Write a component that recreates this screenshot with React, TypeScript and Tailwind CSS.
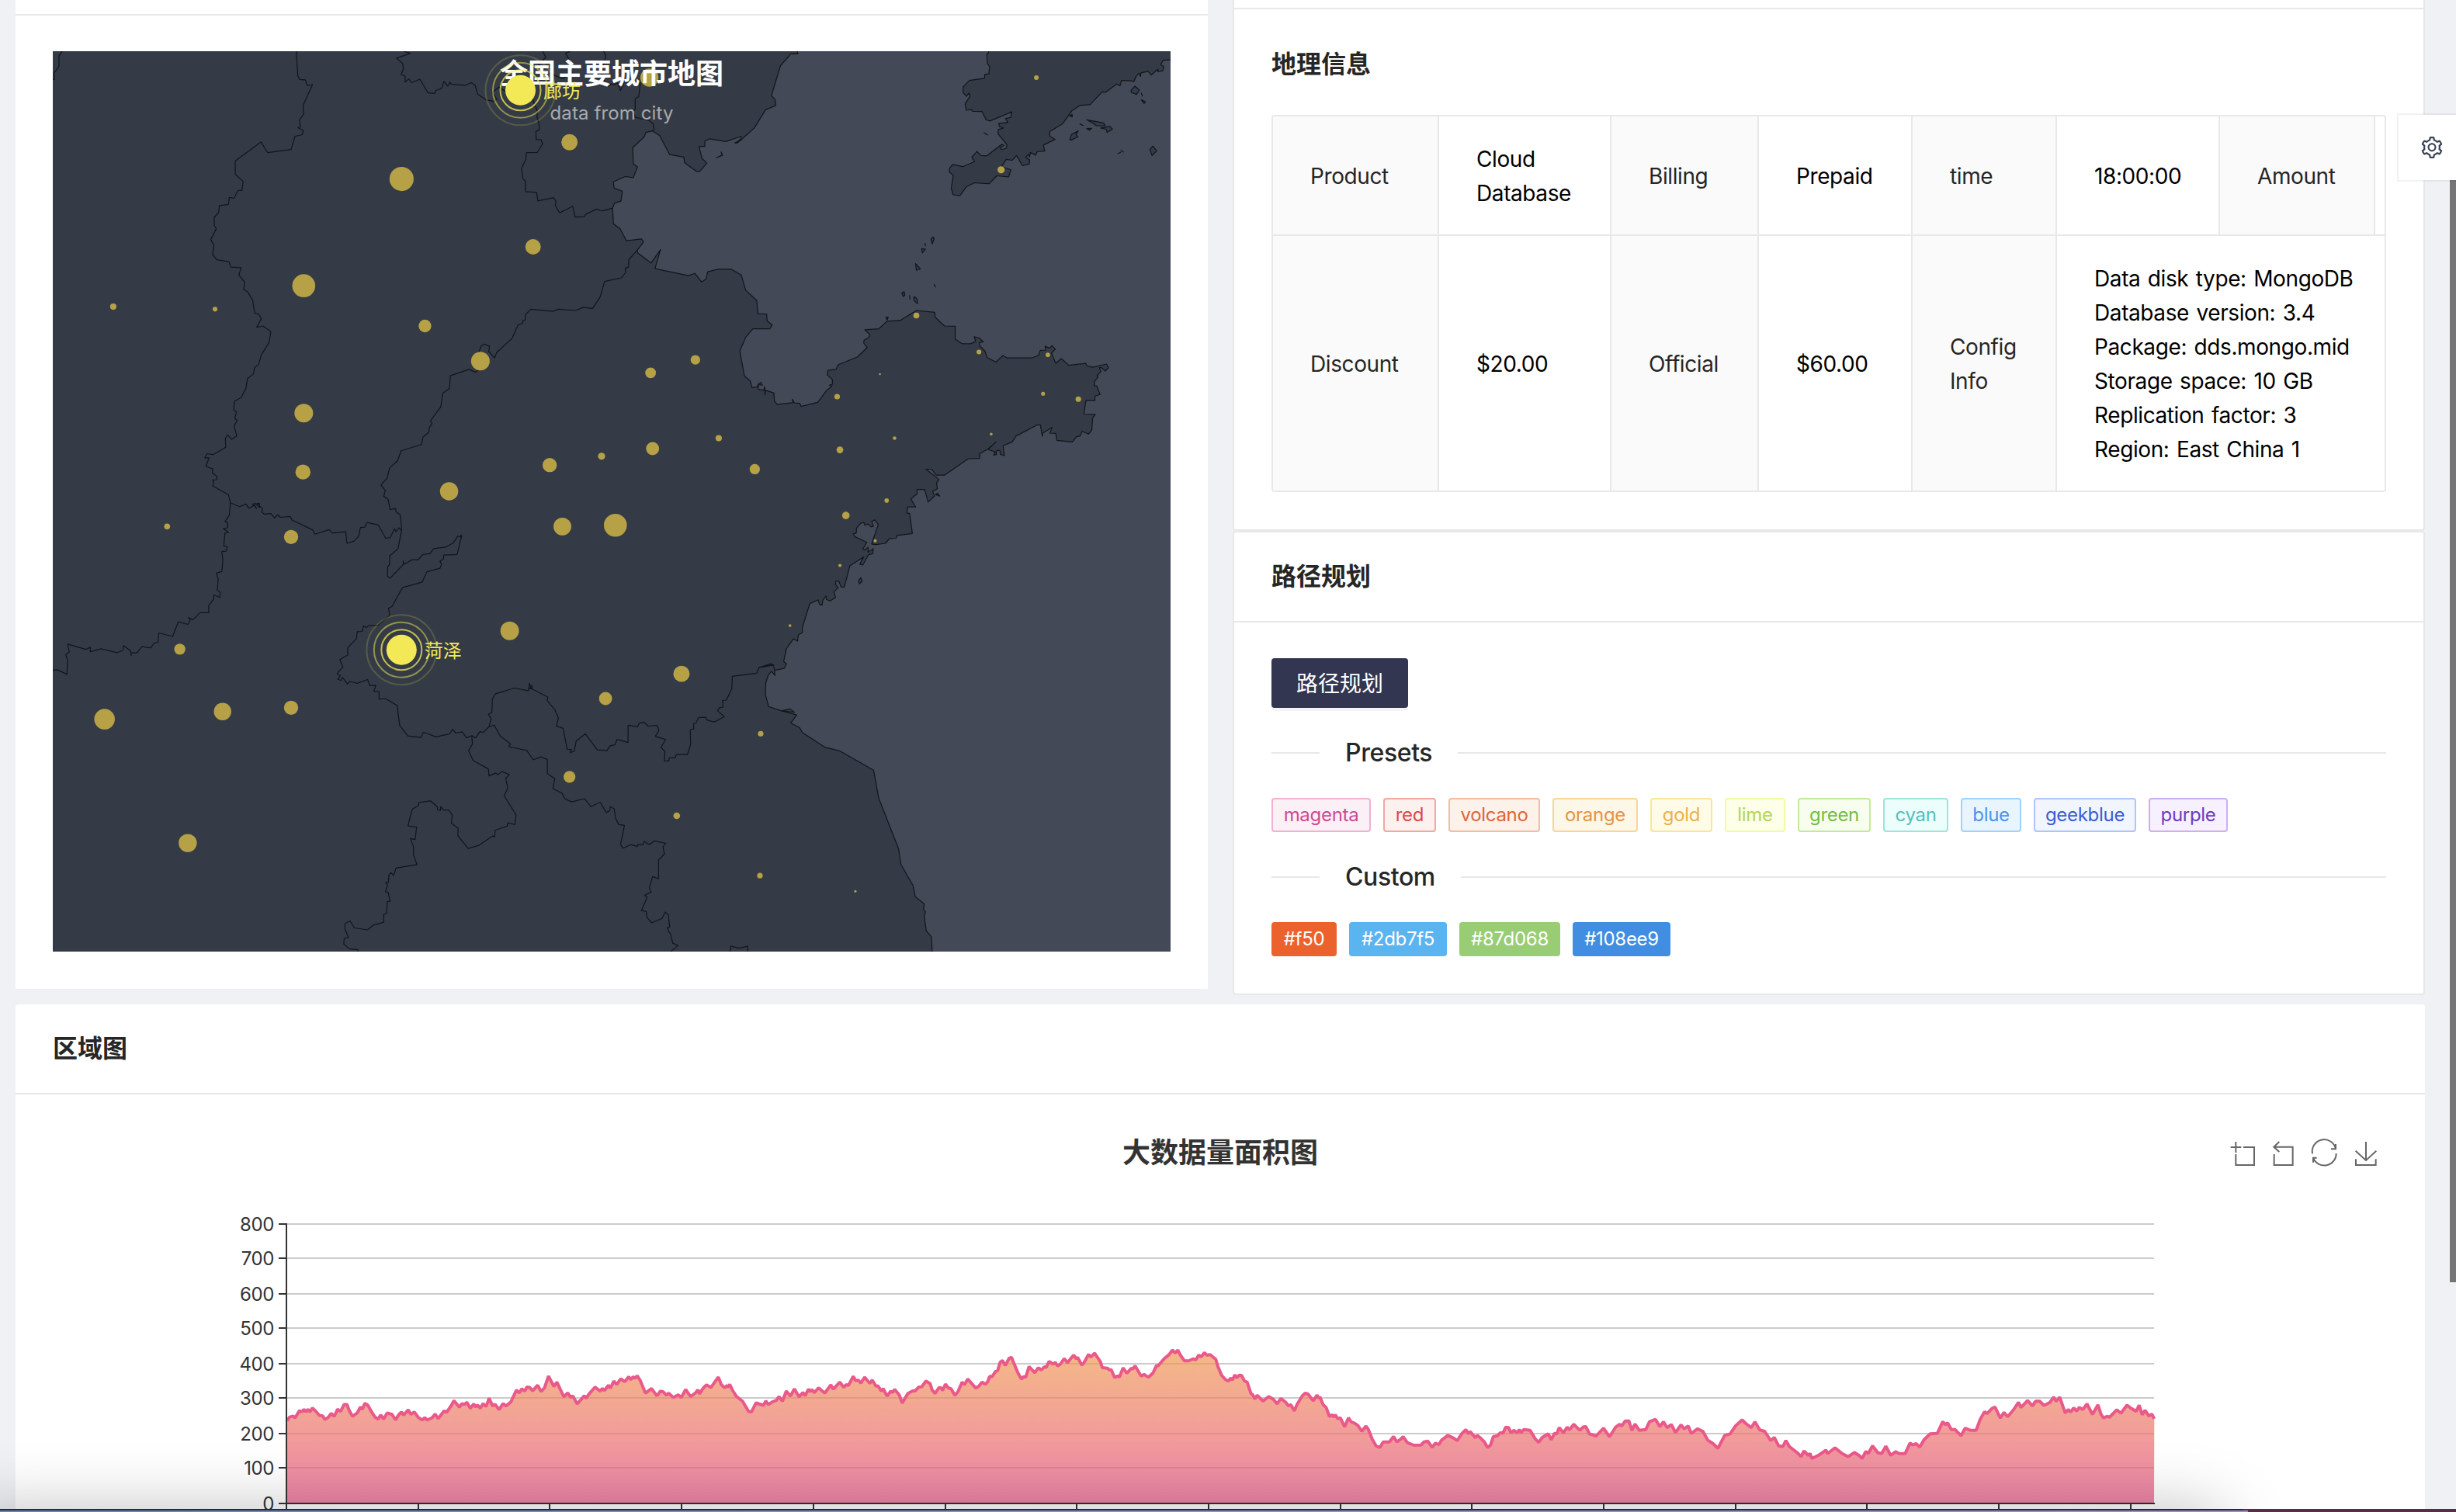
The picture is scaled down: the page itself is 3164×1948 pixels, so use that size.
import React from "react";
import { AiOutlineSetting } from "react-icons/ai";

type Sheet = "A" | "B" | "C" | "D";
type Part = [Sheet, string];

// The map is digitised on four overlapping sheets; each has its own origin.
const SHEETS: Record<Sheet, [number, number]> = { A: [-68, -66], B: [712, -66], C: [-68, 554], D: [712, 554] };

const toXY = (s: Sheet, x: number, y: number): [number, number] => [
  SHEETS[s][0] + x / 1.96,
  SHEETS[s][1] + y / 2.45,
];

const pts = (parts: Part[]) =>
  parts
    .map(([s, str]) =>
      str
        .trim()
        .split(/\s+/)
        .map((p) => {
          const [x, y] = p.split(",").map(Number);
          return toXY(s, x, y).map((n) => n.toFixed(1)).join(",");
        })
        .join(" "),
    )
    .join(" ");

const LAND: Part[][] = [
  [
    ["B", "484,120 484,162 486,170 468,170 442,207 419,302 428,314 430,333 404,347 376,404 341,443 333,451 327,451 336,445 342,438 343,430 304,447 264,438 251,445 251,462 236,462 244,500 256,515 238,541 230,541 200,514 198,496 162,488 137,428 118,413 102,418 98,432 69,466 70,517 81,527 70,561 51,557 20,574 22,594 43,604 39,635 23,641 18,657 20,706 37,722 53,760 91,754 96,764 80,790 82,799 115,830 139,788 125,848 210,870 226,863 243,890 254,881 258,858 284,850 318,850 343,868 354,916 382,949 385,990 407,991 408,1013 421,1025 415,1038 372,1038 354,1065 339,1108 351,1187 366,1203 370,1224 383,1221 386,1212 393,1207 396,1216 387,1214 385,1228 399,1232 402,1220 403,1246 404,1232 425,1240 427,1267 434,1277 473,1271 472,1260 477,1272 491,1273 494,1283 536,1270 558,1233 572,1219 565,1216 573,1213 573,1198 560,1183 562,1169 582,1166 588,1151 636,1127 661,1097 652,1083 653,1073 664,1067 668,1057 655,1041 690,1038 711,1014 745,1011 785,980 831,986 833,1002 856,1029 883,1030 883,1071 901,1085 922,1085 935,1078 931,1063 944,1067 954,1079 944,1082 945,1092 958,1108 964,1129 986,1143 1004,1122 1014,1130 1076,1130 1093,1122 1098,1106 1112,1105 1110,1093 1122,1099 1127,1091 1136,1102 1126,1114 1137,1147 1151,1132 1170,1153 1213,1147 1215,1155 1230,1159 1265,1149 1270,1161 1262,1171 1252,1160 1247,1160 1251,1172 1241,1187 1244,1190 1235,1204 1234,1218 1240,1218 1249,1245 1236,1250 1236,1264 1213,1264 1208,1307 1237,1308 1230,1319 1228,1357 1220,1370 1203,1361 1199,1376 1189,1379 1179,1395 1140,1390 1137,1368 1122,1367 1128,1349 1104,1367 1103,1377 1098,1341 1091,1341 1037,1376 1027,1395 1004,1407 1007,1438 997,1434 996,1422 988,1422 987,1435 980,1436 985,1427 966,1419 986,1395 966,1417 945,1432 945,1447 916,1448 856,1500 835,1500 824,1481 809,1481 842,1513"],
    ["D", "836,6 838,24 826,32 831,46 815,66 806,26 787,26 787,40 771,56 783,81 763,81 761,100 768,102 775,165 736,171 734,180 717,181 707,196 683,200 672,198 689,137 680,122 672,127 677,142 671,144 663,135 655,139 653,130 645,132 634,148 633,164 626,166 629,175 660,193 650,214 655,217 663,208 663,224 676,213 675,229 664,232 650,264 642,262 652,239 617,267 603,334 595,334 589,315 582,315 581,326 588,336 577,349 581,367 567,378 558,373 557,362 549,375 547,391 540,388 537,374 516,386 497,461 497,478 487,485 485,505 475,497 457,528 450,569 457,577 451,591 427,597 428,613 419,600 411,612 405,637 404,674 412,711 445,725 483,738 468,763 490,778 498,794 555,840 591,851 677,912 690,1000 740,1160 746,1209 777,1277 782,1311 805,1334 803,1352 808,1359 805,1374 810,1419 823,1438 827,1530"],
    ["C", "80,1530"],
    ["A", "80,120"],
  ],
  [
    ["B", "967,120 967,167 963,170 964,200 970,210 968,233 958,235 957,247 919,254 903,275 903,292 911,304 918,294 921,303 908,328 911,348 924,346 927,351 951,352 961,378 971,382 1026,353 1023,371 1010,374 1016,386 993,390 995,400 1005,404 992,409 991,422 1014,457 1012,468 1001,472 996,466 1006,460 1001,455 963,492 948,491 938,478 925,496 932,510 902,526 877,519 869,531 868,543 878,553 873,595 878,615 895,618 911,590 931,577 969,580 988,555 1018,558 1024,536 1000,526 1012,503 1027,506 1038,491 1053,523 1070,518 1071,505 1061,496 1069,487 1071,496 1073,481 1086,490 1090,479 1109,477 1106,458 1135,440 1122,430 1122,415 1154,391 1178,349 1198,333 1224,330 1254,290 1263,291 1291,265 1299,271 1303,254 1327,255 1334,258 1339,243 1347,231 1351,241 1352,230 1370,225 1378,237 1395,218 1395,226 1407,224 1410,210 1402,204 1408,190 1427,189 1470,189 1470,120"],
  ],
];

const ISLANDS: Part[] = [
  ["B", "280,498 296,490 292,480 295,489"],
  ["B", "1327,285 1337,272 1348,284 1341,298 1328,292"],
  ["B", "1353,315 1364,321 1360,327"],
  ["B", "1353,294 1356,303"],
  ["B", "1215,378 1258,388 1262,397 1240,397 1230,388"],
  ["B", "1250,404 1274,399 1280,408 1267,418 1264,408"],
  ["B", "1172,440 1177,424 1194,413 1188,424 1193,432 1176,442"],
  ["B", "1215,406 1228,405 1222,411"],
  ["B", "1172,366 1178,361 1179,369"],
  ["B", "1375,472 1382,461 1392,476 1380,491"],
  ["B", "1294,485 1301,480"],
  ["B", "1302,474 1308,480"],
  ["B", "1198,391 1206,396"],
  ["B", "956,419 965,426"],
  ["B", "822,755 827,748 830,753 825,770"],
  ["B", "798,785 808,787 800,798"],
  ["B", "807,768 808,776"],
  ["B", "783,832 795,849 785,853"],
  ["B", "830,898 833,906"],
  ["B", "748,925 754,921 756,931 752,936"],
  ["B", "768,933 769,944"],
  ["B", "779,936 787,944 788,959 779,948"],
  ["B", "708,1001 714,1001 711,1010"],
  ["D", "639,314 645,304 648,316 641,324"],
  ["D", "834,42 838,38 844,47"],
  ["D", "445,725 466,718 477,729"],
  ["D", "388,588 418,576 424,580"],
];

const BORDERS: Part[][] = [
  [
    ["A", "748,150 748,162 752,240 757,251 771,252 776,270 789,267 765,333 767,360 756,379 759,400 752,403 766,412 763,425 745,430 735,472 676,482 659,448 594,508 594,550 614,573 611,601 601,601 591,626 579,623 577,645 554,649 552,671 541,686 541,711 546,722 532,756 540,773 537,803 547,820 578,826 583,843 609,845 603,868 618,891 615,913 625,921 638,948 643,989 653,991 660,1006 648,1033 664,1029 684,1047 679,1082 660,1120 653,1150 643,1160 640,1180 625,1195 621,1226 609,1255 592,1266 590,1294 597,1300 593,1320 599,1328 591,1344 598,1376 585,1387 575,1373 569,1384 570,1412 538,1435 523,1432 517,1445 528,1445 520,1472 537,1480 536,1492 548,1504 547,1514 537,1515 540,1522 537,1534"],
    ["C", "577,43 582,68 579,107 568,128 574,129 575,147 564,150 577,161 568,164 565,204 574,207 571,221 560,222 563,250 560,285 546,290 551,308 549,344 556,350 555,367 540,359 539,373 527,393 527,415 505,415 487,437 476,430 480,440 475,452 450,444 436,490 401,479 399,508 388,512 381,526 358,522 346,542 331,542 331,550 330,536 312,519 310,534 296,541 255,529 228,538 228,524 217,531 171,514 175,539 166,547 171,565 169,609 144,595 133,596"],
  ],
  [["C", "582,68 605,80 621,72 629,86 642,75 648,86 638,72 645,70 655,83 655,70 649,70 663,86 661,97 667,104 684,102 693,116 701,106 708,114 733,111 737,122 790,154 795,167 831,153 839,164 873,159 876,196 894,189 906,173 910,146 921,145 927,130 955,138 974,180 985,178 996,150 1000,160 1007,147 1014,155"]],
  [
    ["B", "80,790 59,820 58,843 50,846 51,860 40,877 0,888"],
    ["A", "1526,890 1515,938 1496,974 1473,970 1453,980 1410,976 1396,983 1340,976 1327,993 1326,1010 1320,1012 1320,1020 1308,1026 1293,1068 1254,1113 1249,1130 1234,1109 1236,1093 1223,1086 1215,1092 1208,1115 1212,1140 1210,1165 1201,1175 1184,1166 1137,1186 1135,1226 1118,1241 1113,1284 1087,1328 1091,1337 1084,1350 1083,1364 1068,1380 1064,1403 1013,1423 1004,1454 984,1477 977,1510 962,1531"],
    ["C", "973,30 969,47 980,57 985,90 999,86 1000,97 1010,105 1013,130 1014,155 1005,213 984,236 984,262 979,270 978,299 985,306 1019,262 1018,252 1021,262 1040,248 1056,248 1068,231 1086,228 1095,213 1125,208 1145,194 1156,173 1164,177 1163,170 1166,172 1154,231 1120,233 1120,245 1111,252 1115,262 1111,275 1078,286 1066,318 1016,336 990,395 981,401 984,423 954,455 932,455 925,462 918,457 914,474 902,475 900,497 878,525 878,549 858,563 866,586 851,607 859,614 853,625 861,629 865,619 877,640 883,632 902,638 928,626 934,645 949,644 944,663 957,664 957,688 973,686 1003,708 1009,770 1030,804 1063,809 1069,792 1101,807 1136,797 1143,783 1151,795 1167,791 1178,810 1191,803 1201,810 1212,790 1220,793 1235,775 1240,748 1233,736 1242,729 1243,688 1251,671 1299,653 1334,661 1337,638 1342,655 1337,655 1343,645 1344,656 1383,681 1382,693 1401,721 1410,748 1405,773 1422,780 1432,846 1443,847 1440,857 1450,852 1455,820 1478,797 1508,848"],
    ["D", "4,850 12,835 24,832 29,815 57,825 57,770 81,775 85,764 96,760 108,773 131,771 135,787 126,805 152,815 140,840 150,852 149,883 160,883 161,873 176,873 179,863 207,863 215,830 214,784 223,782 222,766 229,762 235,746 253,745 257,754 275,760 300,743 283,725 287,716 297,713 296,692 305,691 319,655 320,616 382,606 388,588 424,580 427,597"],
  ],
  [
    ["C", "1235,775 1248,770 1263,804 1289,829 1285,838 1330,850 1347,879 1366,870 1382,878 1382,923 1401,939 1396,970 1419,985 1426,1002 1443,1012 1476,1002 1492,1027 1515,1013 1531,1046"],
    ["D", "11,1040 12,1027 22,1034 26,1066 34,1084 48,1086 38,1147 44,1158 64,1147 81,1153 82,1147 95,1147 98,1137 111,1147 123,1135 152,1143 145,1154 149,1176 134,1196 134,1255 119,1248 111,1283 115,1297 99,1307 105,1313 91,1355 103,1358 105,1378 117,1394 143,1380 151,1360 159,1369 162,1407 156,1409 161,1424 164,1428 170,1458 183,1466 163,1486"],
  ],
  [["C", "1191,803 1193,829 1183,851 1195,882 1233,908 1235,930 1252,921 1257,927 1267,916 1286,926 1277,938 1282,969 1273,993 1303,1053 1300,1084 1282,1078 1281,1088 1250,1102 1249,1123 1244,1120 1208,1150 1182,1159 1156,1119 1157,1096 1140,1080 1142,1053 1133,1038 1120,1038 1113,1027 1112,1039 1105,1038 1104,1027 1087,1009 1058,1014 1056,1024 1041,1035 1030,1088 1052,1092 1048,1131 1036,1128 1044,1153 1044,1180 1053,1210 1000,1221 994,1244 987,1235 982,1243 981,1266 974,1267 979,1275 973,1296 980,1297 985,1326 978,1327 976,1364 969,1368 969,1392 943,1401 928,1416 895,1410 884,1388 871,1396 871,1414 880,1440 869,1443 868,1461 882,1476 904,1479 904,1486"]],
  [["A", "157,150 157,162 149,177 149,210 136,231 138,250 132,252"]],
  [["A", "1020,150 1020,162 1036,168 1001,184 1016,199 1019,217 1013,235 1023,240 1023,259 1032,249 1039,261 1060,250 1081,293 1098,295 1100,286 1115,279 1121,257 1131,272 1136,259 1140,266 1175,269 1190,261 1200,269 1206,297 1227,315 1248,320 1254,313 1244,290 1260,275 1290,300 1345,310 1350,330 1357,350 1356,370 1361,390 1362,410 1353,415 1354,440 1366,441 1370,454 1357,481 1329,482 1328,502 1317,531 1320,563 1327,573 1327,605 1355,607 1358,634 1398,624 1404,636 1402,648 1413,672 1446,651 1452,685 1475,684 1480,676 1506,660 1520,666 1547,657"]],
  [["A", "1370,162 1378,180 1360,205 1368,235"]],
  [["A", "1440,162 1428,168 1440,195 1440,215 1445,230 1420,248 1395,235"]],
  [["A", "1524,162 1530,175 1525,200 1520,235"], ["B", "0,262 8,272 14,265 22,268 30,262 38,286 48,258 62,266 88,262 84,305 75,312 75,345 70,350 75,370 110,380 120,390 123,408 118,413"]],
  [["D", "314,1490 317,1467 337,1474 359,1468 359,1490"]],
];

const DOTS: [Sheet, number, number, number][] = [
  ["A", 1014, 565, 61], ["A", 767, 902, 58], ["A", 1438, 449, 41], ["A", 1346, 779, 39], ["A", 286, 968, 16],
  ["A", 543, 976, 12], ["A", 1073, 1029, 32], ["A", 1213, 1140, 47], ["A", 767, 1304, 47], ["A", 765, 1490, 38],
  ["A", 1388, 1468, 36], ["A", 1519, 1440, 18], ["A", 1134, 1551, 46],
  ["B", 111, 245, 46], ["B", 1088, 245, 12], ["B", 999, 536, 18], ["B", 785, 996, 15], ["B", 943, 1111, 12],
  ["B", 1117, 1120, 11], ["B", 227, 1136, 24], ["B", 114, 1177, 27], ["B", 693, 1181, 5], ["B", 585, 1252, 14],
  ["B", 1105, 1243, 10], ["B", 1194, 1260, 14], ["B", 119, 1416, 33], ["B", 286, 1383, 16], ["B", 592, 1420, 17],
  ["B", 730, 1383, 9], ["B", 974, 1370, 7], ["B", 377, 1481, 26],
  ["C", 422, 143, 15], ["C", 735, 176, 36], ["C", 1420, 143, 45], ["C", 454, 530, 28], ["C", 1287, 472, 47],
  ["C", 264, 751, 52], ["C", 562, 727, 44], ["C", 735, 715, 36], ["C", 1529, 686, 33], ["C", 1438, 933, 30],
  ["C", 474, 1142, 46],
  ["D", 25, 139, 58], ["D", 710, 61, 11], ["D", 607, 108, 19], ["D", 681, 188, 8], ["D", 592, 266, 8],
  ["D", 466, 456, 7], ["D", 192, 608, 41], ["D", 392, 797, 14], ["D", 180, 1056, 17], ["D", 390, 1245, 14],
  ["D", 631, 1294, 6],
];

function Ripple({ x, y, name }: { x: number; y: number; name: string }) {
  return (
    <g>
      <g fill="none" stroke="#f3e957" strokeWidth="2">
        <circle cx={x} cy={y} r="45" opacity="0.18" />
        <circle cx={x} cy={y} r="35.5" opacity="0.5" />
        <circle cx={x} cy={y} r="26" opacity="0.75" />
      </g>
      <circle cx={x} cy={y} r="19.5" fill="#f3e957" />
      <text x={x + 29.5} y={y + 9.5} fontSize="24" fill="#f3e957">
        {name}
      </text>
    </g>
  );
}

function CityMap() {
  return (
    <svg viewBox="0 0 1440 1160" className="block h-[1160px] w-[1440px] bg-[#434956]">
      <g fill="#343b46" stroke="#12151b" strokeWidth="1.2" strokeLinejoin="round">
        {LAND.map((l, i) => (
          <polygon key={i} points={pts(l)} />
        ))}
        {ISLANDS.map((l, i) => (
          <polygon key={i} points={pts([l])} />
        ))}
      </g>
      <g fill="none" stroke="#12151b" strokeWidth="1.2" strokeLinejoin="round">
        {BORDERS.map((l, i) => (
          <polyline key={i} points={pts(l)} />
        ))}
      </g>
      {DOTS.map(([s, x, y, w], i) => {
        const [cx, cy] = toXY(s, x, y);
        return <circle key={i} cx={cx} cy={cy} r={w / 3.92} fill="#b6a146" />;
      })}
      <text x="720" y="42" textAnchor="middle" fontSize="36" fontWeight="700" fill="#fff">
        全国主要城市地图
      </text>
      <text x="720" y="88" textAnchor="middle" fontSize="24" fill="#aaaaaa" textLength="159">
        data from city
      </text>
      <Ripple x={602.5} y={50.3} name="廊坊" />
      <Ripple x={449.3} y={771.2} name="菏泽" />
    </svg>
  );
}

const SERIES: [number, number, number, number, string][] = [
  [0, 1270, 1.568, 2.3127, "580,1296 585,1285 592,1282 596,1288 605,1266 610,1270 614,1262 618,1270 622,1262 626,1270 631,1258 638,1268 645,1280 652,1282 656,1292 663,1286 669,1274 675,1283 682,1262 688,1268 695,1248 701,1248 705,1264 712,1283 722,1272 728,1255 732,1262 737,1244 743,1250 750,1268 758,1286 764,1291 769,1279 775,1291 782,1273 792,1277 799,1294 805,1279 811,1270 815,1279 825,1264 830,1277 837,1270 845,1286 853,1294 858,1287 863,1294 873,1287 879,1276 885,1290 897,1267 902,1271 912,1250 917,1236 928,1256 933,1245 938,1248 943,1241 950,1259 957,1246 961,1255 965,1249 970,1259 976,1245 982,1254 988,1229 995,1252 1000,1247 1008,1263 1016,1245 1022,1252 1032,1240 1043,1205 1049,1213 1054,1201 1060,1208 1064,1196 1070,1197 1076,1207 1086,1190 1093,1209 1100,1198 1108,1163 1119,1194 1125,1181 1131,1200 1139,1225 1147,1213 1153,1227 1157,1222 1166,1246 1180,1222 1184,1229 1190,1216 1202,1196 1212,1208 1217,1200 1221,1206 1229,1190 1233,1199 1240,1178 1246,1188 1254,1171 1262,1180 1270,1165 1274,1174 1279,1165 1283,1170 1287,1162 1293,1175 1304,1214 1310,1207 1316,1200 1327,1222 1334,1208 1340,1210 1346,1220 1351,1214 1360,1227 1370,1219 1376,1227 1385,1203 1395,1224 1405,1213 1410,1204 1413,1216 1420,1200 1427,1189 1436,1197 1451,1166 1457,1188 1464,1198 1469,1190 1470,1197 1474,1188 1480,1206 1488,1224 1500,1238 1512,1268 1518,1270 1527,1243 1542,1250 1547,1237 1552,1248 1560,1240"],
  [1000, 1560, 1.6333, 3, "0,733 6,718 13,736 21,697 30,716 38,688 48,719 56,702 61,714 68,689 72,699 75,691 80,703 89,684 102,704 115,673 120,689 134,662 142,682 147,672 152,674 162,640 167,656 173,655 178,666 186,643 197,667 202,654 210,678 214,676 221,697 225,687 233,716 241,697 245,702 249,690 259,712 265,743 277,706 287,696 292,696 300,681 306,680 315,658 324,668 328,692 334,706 342,684 346,683 350,694 356,670 362,684 368,688 376,713 382,700 391,662 396,672 403,650 420,685 426,678 433,662 440,670 445,660 449,640 454,641 461,622 466,617 471,586 476,578 482,598 490,570 495,566 498,580 509,628 516,650 520,641 525,643 532,602 544,626 551,607 558,615 564,603 568,605 574,582 583,593 587,585 592,600 598,592 606,571 613,587 620,570 626,557 631,572 634,566 643,596 648,586 657,555 662,565 670,550 682,583 686,606 697,608 700,614 705,614 712,644 718,638 722,643 730,607 738,628 747,608 750,612 755,599 768,639 774,632 780,640 784,642 793,626 800,598 803,600 817,570 826,557 834,538 839,550 845,538 850,556 859,580 868,580 877,572 883,576 889,557 894,565 901,548 906,558 913,556 925,574 929,600 937,635 945,652 951,658 957,646 960,654 965,634 969,646 974,635 979,636 985,657 991,662 999,706 1003,712 1007,727 1012,713 1024,735 1028,730 1036,718 1046,728 1054,746 1062,725 1073,742 1077,753 1083,750 1090,773 1096,748 1107,715 1113,705 1119,708 1130,734 1138,712 1141,724 1144,719 1151,750 1157,760 1164,795 1170,788 1173,797 1176,788 1182,804 1187,800 1196,835 1204,800 1210,816 1217,821 1224,830 1232,852 1241,832 1246,845 1254,883 1262,908 1270,915 1277,893 1290,893 1299,872 1306,893 1313,884 1319,873 1328,896 1342,906 1357,905 1363,893 1371,890 1380,914 1387,898 1394,904 1400,886 1413,868 1424,877 1433,888 1443,860 1451,846 1457,862 1460,853 1471,877 1475,868 1483,880 1490,893 1497,915 1503,905 1509,872 1517,870 1524,857 1529,860 1535,836 1541,838 1546,858 1552,848 1559,858"],
  [1940, 1560, 1.281, 3, "22,845 25,857 30,845 40,848 48,880 54,895 60,876 64,870 70,862 75,885 80,860 84,862 88,838 95,858 101,836 105,846 112,825 122,848 128,835 132,834 138,862 149,870 161,840 171,873 181,836 188,825 191,832 197,812 203,812 208,849 213,824 220,848 231,845 237,815 247,806 254,834 260,815 266,838 273,826 280,857 289,827 294,842 301,832 306,861 316,842 325,852 333,886 342,900 350,918 361,868 370,862 379,831 390,808 396,822 405,838 411,815 419,847 427,852 437,888 443,876 450,908 457,911 462,888 468,911 481,935 487,950 492,928 499,945 502,938 505,957 515,946 528,925 531,938 543,916 555,938 565,950 575,934 583,946 588,957 594,930 598,938 605,908 614,935 620,938 627,910 635,945 643,931 649,938 659,938 667,897 671,905 677,900 683,913 690,885 700,862 712,860 721,815 725,826 729,820 735,845 741,845 751,869 758,840 766,848 776,848 783,805 790,776 794,784 802,764 807,758 816,801 822,779 828,796 838,768 846,740 850,760 861,733 869,754 874,736 881,736 888,752 898,740 904,720 908,736 914,720 923,781 928,768 932,778 937,762 942,774 946,760 952,768 959,746 968,787 977,750 982,785 986,800 993,794 996,798 1008,769 1015,782 1025,751 1031,762 1040,775 1045,751 1050,788 1055,771 1061,793 1066,786 1070,804"],
];

const LINE = SERIES.map(([ox, oy, sx, sy, str]) =>
  str
    .split(" ")
    .map((p) => {
      const [x, y] = p.split(",").map(Number);
      return (ox + x / sx - 68).toFixed(1) + "," + (oy + y / sy - 1410).toFixed(1);
    })
    .join(" "),
).join(" ");

const GRID: [number, number][] = [
  [800, 167], [700, 211], [600, 257], [500, 301], [400, 347], [300, 391], [200, 437], [100, 481], [0, 527],
];

function AreaChart() {
  return (
    <svg viewBox="0 0 3008 538" className="block h-[538px] w-[3008px]">
      <defs>
        <linearGradient id="area" gradientUnits="userSpaceOnUse" x1="0" y1="329" x2="0" y2="527">
          <stop offset="0" stopColor="#f09c52" />
          <stop offset="1" stopColor="#e75085" />
        </linearGradient>
      </defs>
      <text x="1504" y="88" textAnchor="middle" fontSize="36" fontWeight="700" fill="#333">
        大数据量面积图
      </text>
      {GRID.map(([v, y]) => (
        <g key={v}>
          {v > 0 && <line x1="301" x2="2707" y1={y} y2={y} stroke="#cccccc" strokeWidth="2" />}
          <text x="285" y={y + 8.5} textAnchor="end" fontSize="24" letterSpacing="-0.4" fill="#333">
            {v}
          </text>
        </g>
      ))}
      <polygon points={"301.5,527 " + LINE + " 2707,527"} fill="url(#area)" opacity="0.7" />
      <polyline points={LINE} fill="none" stroke="#e9598a" strokeWidth="4" strokeLinejoin="bevel" />
      <g stroke="#333" strokeWidth="2">
        {GRID.map(([v, y]) => (
          <line key={v} x1="291" x2="301" y1={y} y2={y} />
        ))}
        <line x1="301" x2="301" y1="166" y2="528" />
        <line x1="300" x2="2708" y1="527" y2="527" />
        {Array.from({ length: 15 }, (_, i) => {
          const x = Math.round(301 + i * 169.7);
          return <line key={i} x1={x} x2={x} y1="527" y2="537" />;
        })}
      </g>
      <g transform="translate(2752 10) scale(0.33333)" fill="none" stroke="#666" strokeWidth="6">
        <path d="M161 174H202M181 153V195M210 174H252V243H181V201" />
        <path d="M349 153L328 173L349 192M328 173H401V243H329V201" />
        <path d="M477 199A46 46 0 0 1 567 180M567 162V181H549M569 198A46 46 0 0 1 480 215M480 233V215H494" />
        <path d="M684 153V225M644 188L684 225L724 188M645 220V243H722V220" />
      </g>
    </svg>
  );
}

function Cell({ className, label, children }: { className: string; label?: boolean; children?: React.ReactNode }) {
  return (
    <div
      className={
        "flex shrink-0 items-center border-[#e8e8e8] pt-0.5 pl-12 " +
        (label ? "bg-[#fafafa] text-[#262626] " : "text-black ") +
        className
      }
    >
      <div>{children}</div>
    </div>
  );
}

const CONFIG = [
  "Data disk type: MongoDB",
  "Database version: 3.4",
  "Package: dds.mongo.mid",
  "Storage space: 10 GB",
  "Replication factor: 3",
  "Region: East China 1",
];

const PRESETS = [
  ["magenta", "w-[128px] border-[#f0b1d3] bg-[#fbf0f6] text-[#cc4a92]"],
  ["red", "w-[68px] border-[#f0a8a2] bg-[#fcf1ef] text-[#da4a48]"],
  ["volcano", "w-[118px] border-[#f2bda0] bg-[#fcf2ea] text-[#df6539]"],
  ["orange", "w-[110px] border-[#f6d699] bg-[#fdf7e8] text-[#e49342]"],
  ["gold", "w-[80px] border-[#f9e69a] bg-[#fefbe8] text-[#ebb14b]"],
  ["lime", "w-[78px] border-[#f0fc9d] bg-[#fdffe9] text-[#b4d551]"],
  ["green", "w-[94px] border-[#c4e89c] bg-[#f8feee] text-[#73bd45]"],
  ["cyan", "w-[84px] border-[#9ee3dc] bg-[#ebfefb] text-[#5bbdbd]"],
  ["blue", "w-[78px] border-[#a0d2f9] bg-[#e9f5fe] text-[#4a92ee]"],
  ["geekblue", "w-[132px] border-[#afc4f9] bg-[#f0f5fe] text-[#3c5bd3]"],
  ["purple", "w-[102px] border-[#cdaff0] bg-[#f7f0fe] text-[#6a3bc0]"],
];

const CUSTOM = [
  ["#f50", "w-[84px] bg-[#eb622d]"],
  ["#2db7f5", "w-[126px] bg-[#5ab4ef]"],
  ["#87d068", "w-[130px] bg-[#99cd75]"],
  ["#108ee9", "w-[126px] bg-[#408de1]"],
];

function Divider({ title }: { title: string }) {
  return (
    <div className="flex h-12 items-center text-[32px] font-medium text-[#262626]">
      <div className="mt-1 h-[2px] w-[62px] bg-[#e8e8e8]" />
      <span className="px-[33px] pt-[3px] leading-none tracking-[-0.4px]">{title}</span>
      <div className="mt-1 h-[2px] grow bg-[#e8e8e8]" />
    </div>
  );
}

export default function App() {
  return (
    <div className="relative h-[1948px] w-[3164px] overflow-hidden bg-[#f0f1f5] font-['Inter','Noto_Sans_CJK_SC',sans-serif]">
      <div className="flex h-[1944px] flex-col overflow-hidden pr-10 pl-5">
        <div className="flex h-[1282px] shrink-0 items-start gap-8">
          <section className="h-[1274px] w-[1536px] bg-white">
            <div className="h-5 border-b-2 border-[#e8e8e8]" />
            <div className="px-12 pt-[46px]">
              <CityMap />
            </div>
          </section>
          <div className="w-[1536px]">
            <section className="h-[684px] rounded-b border-2 border-t-0 border-[#e8e8e8] bg-white">
              <div className="h-3 border-b-2 border-[#e8e8e8]" />
              <div className="px-12 pt-[47px]">
                <h3 className="h-12 text-[32px] leading-[48px] font-bold text-[#262626]">地理信息</h3>
                <div className="mt-[41px] overflow-hidden rounded border-2 border-[#e8e8e8] text-[28px] leading-[44px] tracking-[-0.4px] [word-spacing:2px]">
                  <div className="flex h-[154px] border-b-2 border-[#e8e8e8]">
                    <Cell label className="w-[214px] border-r-2">Product</Cell>
                    <Cell className="w-[222px] border-r-2">
                      Cloud
                      <br />
                      Database
                    </Cell>
                    <Cell label className="w-[190px] border-r-2">Billing</Cell>
                    <Cell className="w-[198px] border-r-2">Prepaid</Cell>
                    <Cell label className="w-[186px] border-r-2">time</Cell>
                    <Cell className="w-[210px] border-r-2">18:00:00</Cell>
                    <Cell label className="w-[200px] border-r-2">Amount</Cell>
                  </div>
                  <div className="flex h-[328px]">
                    <Cell label className="w-[214px] border-r-2">Discount</Cell>
                    <Cell className="w-[222px] border-r-2">$20.00</Cell>
                    <Cell label className="w-[190px] border-r-2">Official</Cell>
                    <Cell className="w-[198px] border-r-2">$60.00</Cell>
                    <Cell label className="w-[186px] border-r-2">
                      Config
                      <br />
                      Info
                    </Cell>
                    <Cell className="w-[422px] whitespace-nowrap">
                      {CONFIG.map((c) => (
                        <div key={c}>{c}</div>
                      ))}
                    </Cell>
                  </div>
                </div>
              </div>
            </section>
            <section className="h-[598px] rounded border-2 border-[#e8e8e8] bg-white">
              <div className="flex h-[116px] items-center border-b-2 border-[#e8e8e8] px-12">
                <h3 className="text-[32px] leading-[48px] font-bold text-[#262626]">路径规划</h3>
              </div>
              <div className="px-12 pt-[46px]">
                <button className="block h-16 w-44 rounded bg-[#323650] text-[28px] leading-[66px] text-white shadow-[0_4px_0_rgba(0,0,0,0.045)]">
                  路径规划
                </button>
                <div className="mt-8">
                  <Divider title="Presets" />
                </div>
                <div className="mt-9 flex gap-4">
                  {PRESETS.map(([name, cls]) => (
                    <span key={name} className={"flex h-11 items-center justify-center rounded border-2 text-2xl tracking-[-0.3px] " + cls}>
                      {name}
                    </span>
                  ))}
                </div>
                <div className="mt-8">
                  <Divider title="Custom" />
                </div>
                <div className="mt-9 flex gap-4">
                  {CUSTOM.map(([name, cls]) => (
                    <span key={name} className={"flex h-11 items-center justify-center rounded text-2xl tracking-[-0.3px] text-white " + cls}>
                      {name}
                    </span>
                  ))}
                </div>
              </div>
            </section>
          </div>
        </div>
        <section className="mt-3 h-[700px] shrink-0 rounded bg-white">
          <div className="flex h-[116px] items-center border-b-2 border-[#e8e8e8] px-12">
            <h3 className="text-[32px] leading-[48px] font-bold text-[#262626]">区域图</h3>
          </div>
          <div className="px-12">
            <AreaChart />
          </div>
        </section>
      </div>

      {/* scroll thumb */}
      <div className="absolute top-[190px] right-0 h-[1462px] w-2 bg-[#757575]" />
      {/* settings handle */}
      <button className="absolute top-[146px] right-0 flex h-[88px] w-[76px] items-center border-2 border-r-0 border-black/5 bg-white bg-clip-padding pl-[27px] text-[#3a4354]">
        <AiOutlineSetting className="size-8" />
      </button>
      {/* window shadow and edge */}
      <div className="absolute top-[1946px] -left-10 h-40 w-[2900px] shadow-[0_0_84px_rgba(0,0,0,0.26)]" />
      <div className="absolute top-[1944px] left-0 h-1 w-full bg-[#5c2b45]" />
      <div className="absolute top-[1944px] left-0 h-[2px] w-[2890px] bg-[#212c44]" />
      <div className="absolute top-[1946px] left-0 h-[2px] w-[2896px] bg-linear-to-r from-[#6b82a8] via-[#8f92bb] to-[#a48cb4]" />
    </div>
  );
}
